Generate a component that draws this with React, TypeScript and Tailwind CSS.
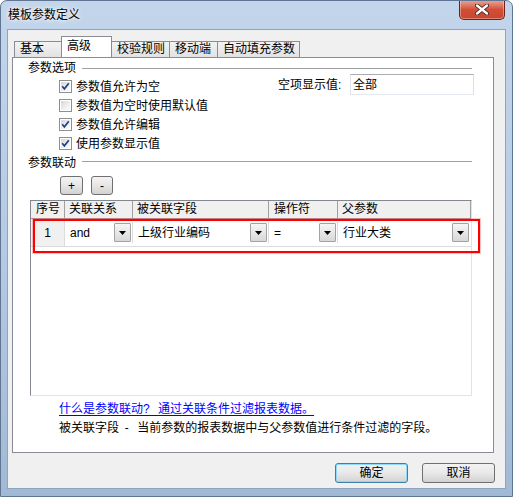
import React from "react";

const FONT = "[font-family:'Liberation_Sans','Noto_Sans_CJK_SC',sans-serif]";

function Check({ checked }: { checked: boolean }) {
  return (
    <span className="relative inline-block h-[13px] w-[13px] shrink-0 border border-[#8e8f8f] bg-white">
      <span className="absolute inset-[1px] bg-gradient-to-br from-[#d6d6d6] via-[#ececec] to-[#fbfbfb]" />
      {checked && (
        <svg className="absolute left-0 top-0" width="11" height="11" viewBox="0 0 11 11">
          <path d="M2.2 5.2 L4.4 7.8 L8.8 2.2" fill="none" stroke="#22408a" strokeWidth="1.7" />
        </svg>
      )}
    </span>
  );
}

function DropBtn() {
  return (
    <span className="flex h-[19px] w-[17px] shrink-0 items-center justify-center rounded-[1px] border border-[#a3a3a3] bg-gradient-to-b from-[#f6f6f6] to-[#d8d8d8]">
      <svg width="7" height="4" viewBox="0 0 7 4">
        <path d="M0 0H7L3.5 4Z" fill="#000" />
      </svg>
    </span>
  );
}

function Combo({ text, w, last }: { text: string; w?: string; last?: boolean }) {
  return (
    <div
      className={`flex h-full items-center justify-between bg-white pl-[5px] pr-[1px] ${
        last ? "flex-1" : `${w} border-r border-[#dcdcdc]`
      }`}
    >
      <span>{text}</span>
      <DropBtn />
    </div>
  );
}

function Tab({ label, w, active }: { label: string; w: string; active?: boolean }) {
  if (active) {
    return (
      <div
        className={`relative z-10 -ml-px h-[21px] ${w} border border-b-0 border-[#898c95] bg-white pl-[5px] pt-[2px] leading-[14px]`}
      >
        {label}
      </div>
    );
  }
  return (
    <div
      className={`-ml-px h-[16px] ${w} border border-b-0 border-[#898c95] bg-gradient-to-b from-[#f3f3f3] to-[#e2e2e2] pl-[5px] leading-[15px] first:ml-0`}
    >
      {label}
    </div>
  );
}

export default function App() {
  return (
    <div
      className={`relative h-[497px] w-[513px] overflow-hidden rounded-t-[7px] border border-[#5f7592] bg-gradient-to-b from-[#c3d5eb] via-[#b5cae4] to-[#a2b9d5] text-[12px] text-black ${FONT}`}
    >
      {/* title bar */}
      <div className="flex h-[28px] items-center pl-[7px] [text-shadow:0_0_6px_#fff,0_0_3px_#fff]">
        模板参数定义
      </div>
      {/* close button */}
      <div className="absolute right-[7px] top-[-1px] flex h-[20px] w-[46px] items-center justify-center rounded-b-[5px] border border-t-0 border-[#6b2418] bg-gradient-to-b from-[#e9a898] via-[#d24f37] to-[#c9452c] shadow-[inset_0_0_0_1px_rgba(255,255,255,0.35)]">
        <svg width="14" height="11" viewBox="0 0 14 11">
          <path d="M2 1.5 L12 9.5 M12 1.5 L2 9.5" stroke="#3a1a14" strokeWidth="4" strokeLinecap="round" />
          <path d="M2 1.5 L12 9.5 M12 1.5 L2 9.5" stroke="#fff" strokeWidth="2.4" strokeLinecap="round" />
        </svg>
      </div>

      {/* client area */}
      <div className="ml-[6px] h-[460px] w-[499px] border border-[#8fa4bf] bg-[#f0f0f0] pt-[6px]">
        {/* tabs */}
        <div className="ml-[6px] flex h-[21px] items-end">
          <Tab label="基本" w="w-[48px]" />
          <Tab label="高级" w="w-[51px]" active />
          <Tab label="校验规则" w="w-[59px]" />
          <Tab label="移动端" w="w-[49px]" />
          <Tab label="自动填充参数" w="w-[83px]" />
        </div>

        {/* panel */}
        <div className="relative ml-[4px] h-[396px] w-[482px] border border-[#898c95] bg-white pl-[15px] pr-[21px] pt-[3px]">
          {/* group 1 */}
          <div className="flex h-[14px] items-center gap-[6px] leading-[14px]">
            <span>参数选项</span>
            <span className="h-px flex-1 bg-[#a0a0a0]" />
          </div>
          <div className="mt-[2px] pl-[31px]">
            <div className="flex h-[19px] items-center justify-between">
              <div className="flex items-center gap-[4px]">
                <Check checked />
                <span>参数值允许为空</span>
              </div>
              <div className="-mr-[2px] -mt-[3px] flex h-[21px] items-center gap-[6px] self-start">
                <span className="w-[66px]">
                  空项显示值<span className="tracking-[2px]">:</span>
                </span>
                <div className="flex h-[21px] w-[124px] items-center border border-[#abadb3] border-b-[#e3e9ef] border-l-[#e2e3ea] border-r-[#dbdfe6] pl-[2px]">
                  全部
                </div>
              </div>
            </div>
            <div className="flex h-[19px] items-center gap-[4px]">
              <Check checked={false} />
              <span>参数值为空时使用默认值</span>
            </div>
            <div className="flex h-[19px] items-center gap-[4px]">
              <Check checked />
              <span>参数值允许编辑</span>
            </div>
            <div className="flex h-[19px] items-center gap-[4px]">
              <Check checked />
              <span>使用参数显示值</span>
            </div>
          </div>

          {/* group 2 */}
          <div className="mt-[3px] flex h-[14px] items-center gap-[6px] leading-[14px]">
            <span>参数联动</span>
            <span className="-mt-[4px] h-px flex-1 bg-[#a0a0a0]" />
          </div>
          <div className="ml-[32px] mt-[6px] flex gap-[8px]">
            <button className="flex h-[19px] w-[23px] items-center justify-center rounded-[3px] border border-[#707070] bg-gradient-to-b from-[#f4f4f4] via-[#e6e6e6] to-[#d2d2d2] leading-none">
              +
            </button>
            <button className="flex h-[19px] w-[22px] items-center justify-center rounded-[3px] border border-[#707070] bg-gradient-to-b from-[#f4f4f4] via-[#e6e6e6] to-[#d2d2d2] leading-none">
              -
            </button>
          </div>

          {/* table */}
          <div className="ml-[2px] mt-[5px] flex h-[196px] flex-col border border-[#828790] border-b-[#e3e3e3] border-r-[#e3e3e3] bg-white">
            <div className="flex h-[18px] border-b border-[#a0a0a0] bg-[#f0f0f0] leading-[17px]">
              <div className="w-[34px] border-r border-[#a0a0a0] pl-[5px]">序号</div>
              <div className="w-[68px] border-r border-[#a0a0a0] pl-[4px]">关联关系</div>
              <div className="w-[136px] border-r border-[#a0a0a0] pl-[4px]">被关联字段</div>
              <div className="w-[69px] border-r border-[#a0a0a0] pl-[5px]">操作符</div>
              <div className="flex-1 border-r border-[#a0a0a0] pl-[4px]">父参数</div>
            </div>
            <div className="flex h-[28px] border-b border-[#dcdcdc] py-[3px] pr-px">
              <div className="-my-[3px] flex w-[34px] items-center justify-center border-r border-[#dcdcdc] bg-[#f0f0f0]">
                1
              </div>
              <Combo text="and" w="w-[68px]" />
              <Combo text="上级行业编码" w="w-[136px]" />
              <Combo text="=" w="w-[69px]" />
              <Combo text="行业大类" last />
            </div>
          </div>

          {/* texts */}
          <div className="mt-[5px] pl-[31px] leading-[16px]">
            <div className="text-[#0000ff] underline underline-offset-[2px]">
              什么是参数联动<span className="tracking-[2.5px]">? </span>通过关联条件过滤报表数据。
            </div>
            <div className="mt-[3px]">
              被关联字段<span className="tracking-[2.5px]"> - </span>当前参数的报表数据中与父参数值进行条件过滤的字段。
            </div>
          </div>

          {/* red annotation box */}
          <div className="pointer-events-none absolute left-[20px] top-[161px] h-[34px] w-[447px] border-2 border-[#ff0000] shadow-[0_0_0_1px_rgba(255,80,80,0.35)]" />
        </div>

        {/* buttons */}
        <div className="mr-[10px] mt-[10px] flex justify-end gap-[14px]">
          <button className="flex h-[20px] w-[73px] items-center justify-center rounded-[3px] border border-[#3c7fb1] bg-gradient-to-b from-[#f2f2f2] via-[#e8e8e8] to-[#d3d3d3] shadow-[inset_0_0_0_1px_#8fd8f8]">
            确定
          </button>
          <button className="flex h-[20px] w-[73px] items-center justify-center rounded-[3px] border border-[#707070] bg-gradient-to-b from-[#f2f2f2] via-[#e9e9e9] to-[#d1d1d1]">
            取消
          </button>
        </div>
      </div>
    </div>
  );
}
